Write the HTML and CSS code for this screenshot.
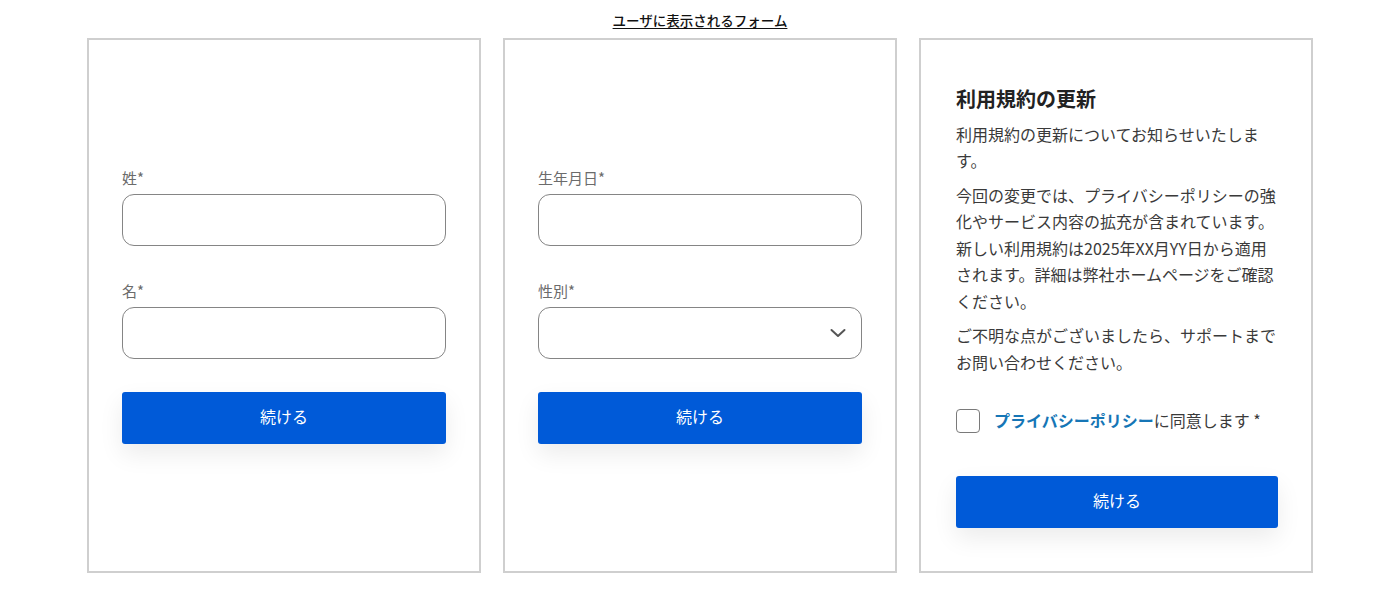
FILE: index.html
```html
<!DOCTYPE html>
<html lang="ja">
<head>
<meta charset="utf-8">
<title>ユーザに表示されるフォーム</title>
<link rel="stylesheet" href="styles.css">
</head>
<body>
<header class="page-head">
  <a class="page-title" href="#">ユーザに表示されるフォーム</a>
</header>
<main class="cards">
  <section class="card">
    <div class="form">
      <div class="field">
        <label class="label">姓*</label>
        <div class="input"></div>
      </div>
      <div class="field">
        <label class="label">名*</label>
        <div class="input"></div>
      </div>
      <button class="btn">続ける</button>
    </div>
  </section>
  <section class="card">
    <div class="form">
      <div class="field">
        <label class="label">生年月日*</label>
        <div class="input"></div>
      </div>
      <div class="field">
        <label class="label">性別*</label>
        <div class="input select">
          <svg class="chevron" width="16" height="10" viewBox="0 0 16 10"><path d="M1.5 2 L8 8 L14.5 2" fill="none" stroke="#555" stroke-width="2" stroke-linecap="round" stroke-linejoin="round"/></svg>
        </div>
      </div>
      <button class="btn">続ける</button>
    </div>
  </section>
  <section class="card">
    <div class="terms">
      <h2 class="terms-title">利用規約の更新</h2>
      <p class="para">利用規約の更新についてお知らせいたします。</p>
      <p class="para">今回の変更では、プライバシーポリシーの強化やサービス内容の拡充が含まれています。新しい利用規約は2025年XX月YY日から適用されます。詳細は弊社ホームページをご確認ください。</p>
      <p class="para">ご不明な点がございましたら、サポートまでお問い合わせください。</p>
      <div class="agree">
        <span class="checkbox"></span>
        <span class="agree-text"><a class="link" href="#">プライバシーポリシー</a>に同意します *</span>
      </div>
      <button class="btn btn-terms">続ける</button>
    </div>
  </section>
</main>
</body>
</html>
```

FILE: styles.css
```css
* { box-sizing: border-box; }
html, body { margin: 0; padding: 0; background: #fff; }
body {
  font-family: "Noto Sans CJK JP", "Noto Sans", sans-serif;
  color: #333;
}
.page-head {
  height: 38px;
  padding-top: 9px;
  text-align: center;
  line-height: 20px;
}
.page-title {
  font-size: 13.5px;
  line-height: 20px;
  font-weight: 500;
  color: #111;
  text-decoration: underline;
  text-underline-offset: 2px;
}
.cards {
  display: flex;
  justify-content: center;
  gap: 22px;
}
.card {
  width: 394px;
  height: 535px;
  border: 2px solid #cfcfcf;
  padding: 0 33px;
  display: flex;
  flex-direction: column;
  justify-content: center;
}
.form {
  display: flex;
  flex-direction: column;
}
.field {
  display: flex;
  flex-direction: column;
  margin-bottom: 33px;
}
.field + .field { margin-top: 2px; }
.label {
  font-size: 15px;
  line-height: 20px;
  color: #6b6b6b;
  margin-bottom: 6px;
}
.input {
  height: 52px;
  border: 1px solid #858585;
  border-radius: 12px;
  background: #fff;
  position: relative;
  display: flex;
  align-items: center;
  justify-content: flex-end;
  padding-right: 15px;
}
.chevron { display: block; }
.btn {
  height: 52px;
  width: 100%;
  border: none;
  border-radius: 3px;
  background: #005ad8;
  color: #fff;
  font-family: inherit;
  font-size: 16px;
  padding: 0 0 4px;
  box-shadow: 0 10px 24px rgba(0, 0, 0, 0.08);
  cursor: pointer;
}
.terms {
  display: flex;
  flex-direction: column;
  padding-left: 2px;
  padding-top: 2px;
}
.terms-title {
  margin: 0 0 8px;
  font-size: 20px;
  line-height: 28px;
  font-weight: 700;
  color: #222;
}
.para {
  margin: 0 0 8px;
  font-size: 16px;
  line-height: 26.5px;
  color: #3a3a3a;
}
.agree {
  display: flex;
  align-items: center;
  gap: 14px;
  margin-top: 26px;
  height: 24px;
}
.checkbox {
  width: 24px;
  height: 24px;
  border: 1.5px solid #7a7a7a;
  border-radius: 4px;
  flex: none;
}
.agree-text {
  font-size: 16px;
  line-height: 24px;
  color: #3a3a3a;
  padding-bottom: 2px;
}
.link {
  color: #1676b6;
  font-weight: 700;
  text-decoration: none;
}
.btn-terms { margin-top: 43px; }
```
